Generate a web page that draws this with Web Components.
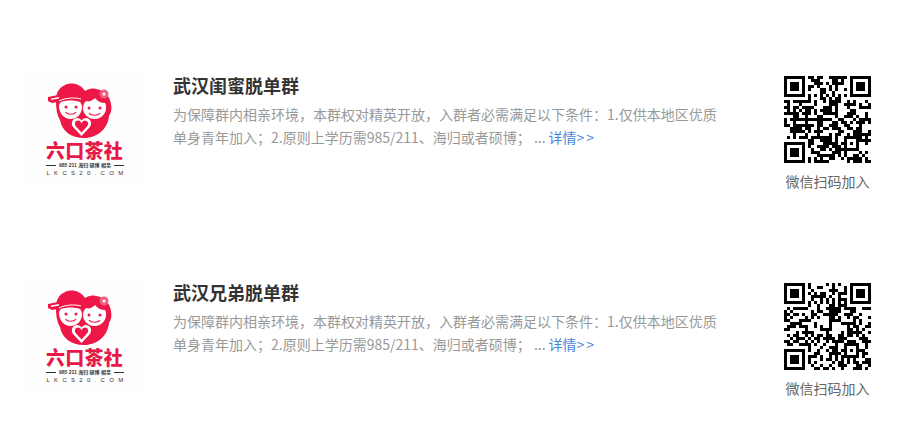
<!DOCTYPE html>
<html lang="zh">
<head>
<meta charset="utf-8">
<style>
  html, body { margin: 0; background: #fff; }
  body { font-family: "Noto Sans CJK SC", "Noto Sans", sans-serif; }
  main { display: flex; flex-direction: column; gap: 87px; padding-top: 72px; width: 897px; }
</style>
</head>
<body>
<main>
  <group-card heading="武汉闺蜜脱单群" seed="11">
    <span slot="one">为保障群内相亲环境，本群权对精英开放，入群者必需满足以下条件：1.仅供本地区优质</span>
    <span slot="two">单身青年加入；2.原则上学历需985/211、海归或者硕博； ...</span>
  </group-card>
  <group-card heading="武汉兄弟脱单群" seed="29">
    <span slot="one">为保障群内相亲环境，本群权对精英开放，入群者必需满足以下条件：1.仅供本地区优质</span>
    <span slot="two">单身青年加入；2.原则上学历需985/211、海归或者硕博； ...</span>
  </group-card>
</main>
<script>
// red couple logo, brand name stays real text
class TeaLogo extends HTMLElement {
  constructor() {
    super();
    this.attachShadow({ mode: "open" }).innerHTML = `
      <style>
        :host { display: flex; flex-direction: column; align-items: center; width: 116px; height: 116px; background: #fefefe; }
        svg { display: block; margin-top: 10px; flex: none; }
        .name { font: 900 19px/22px "Liberation Sans", "Noto Sans CJK SC", sans-serif; color: #e8184a; letter-spacing: .3px; margin: 3px 1px -1px 0; white-space: nowrap; }
        .tag { display: flex; align-items: center; gap: 3px; font: 700 5px/7px "Liberation Sans", "Noto Sans CJK SC", sans-serif; color: #333; white-space: nowrap; }
        .tag i { width: 10px; height: 1px; background: #333; }
        .url { font: 400 6px/9px "Liberation Sans", sans-serif; letter-spacing: 4.3px; color: #333; white-space: nowrap; margin-right: -4px; }
      </style>
      <svg width="80" height="56" viewBox="0 0 80 56">
        <!-- hat, hair and shared body -->
        <path d="M11 18c0-8 4-13 9-15 3-2 10-2 13 0 3 1 5 3 7 6 3-2 7-3 11-2 8 1 14 7 15 15 1 5 0 9-2 12-1 12-11 22-25 22-13 0-22-7-24-18-3-5-4-11-4-20z" fill="#ed1848"/>
        <circle cx="59" cy="12" r="4.500" fill="#ef5f82"/>
        <circle cx="59" cy="12" r="1.500" fill="#fff"/>
        <!-- hat brim -->
        <path d="M3 19l0-4 10-2 22-2 2 4-20 4-10 2z" fill="#ed1848"/>
        <path d="M6 18l0-1.500 8-1.500 0 1.500z" fill="#fff"/>
        <path d="M14 19c6-3 15-4 22-2" fill="none" stroke="#fff" stroke-width="1"/>
        <!-- faces -->
        <path d="M14 24c0-2 1-3 2-4 6-2 13-2 19 0 1 1 2 3 2 5 0 7-5 12-11.500 12S14 31 14 24z" fill="#fff"/>
        <path d="M38 26c0-3 1-5 3-7 3 1 6 0 9-3 2 3 6 5 10 5 1 1 1 3 1 5 0 6-5 11-11.500 11S38 32 38 26z" fill="#fff"/>
        <g fill="#ed1848"><circle cx="21" cy="25" r="1.500"/><circle cx="31" cy="25" r="1.500"/><circle cx="44" cy="26" r="1.500"/><circle cx="55" cy="26" r="1.500"/></g>
        <g fill="none" stroke="#ed1848" stroke-width="1.200"><path d="M20.500 30c2 3 8.500 3 10.500 0"/><path d="M44 31c2 3 9 3 11 0"/></g>
        <!-- heart -->
        <path d="M36.500 54l-8-8.500c-3.500-4-1-9.500 3.500-9.500 2 0 3.500 1 4.500 2.500 1-1.500 2.500-2.500 4.500-2.500 4.500 0 7 5.500 3.500 9.500z" fill="#fff"/>
        <path d="M36.500 50.500l-5.500-6c-2.500-3-.5-6 2-6 1.500 0 3 1 3.500 3 .5-2 2-3 3.500-3 2.500 0 4.500 3 2 6z" fill="#ed1848"/>
      </svg>
      <div class="name">六口茶社</div>
      <div class="tag"><i></i><span>985 211 海归 硕博 相亲</span><i></i></div>
      <div class="url">LKCS20.COM</div>
    `;
  }
}

// stand-in QR matrix: 29 modules with finders, timing lines and alignment square
class QrCode extends HTMLElement {
  connectedCallback() {
    const n = 29;
    let s = parseInt(this.getAttribute("seed") || "1", 10) * 2654435761 >>> 0 || 1;
    const rnd = () => {
      s ^= s << 13; s >>>= 0;
      s ^= s >>> 17;
      s ^= s << 5; s >>>= 0;
      return (s >>> 7) % 100 < 52 ? 1 : 0;
    };
    for (let i = 0; i < 20; i++) rnd();
    const finder = (x, y, ox, oy) => {
      const a = x - ox, b = y - oy;
      if (a < -1 || b < -1 || a > 7 || b > 7) return null;
      if (a < 0 || b < 0 || a > 6 || b > 6) return 0;
      if (a === 0 || b === 0 || a === 6 || b === 6) return 1;
      return a >= 2 && a <= 4 && b >= 2 && b <= 4 ? 1 : 0;
    };
    let d = "";
    for (let y = 0; y < n; y++) for (let x = 0; x < n; x++) {
      let v = finder(x, y, 0, 0);
      if (v === null) v = finder(x, y, 22, 0);
      if (v === null) v = finder(x, y, 0, 22);
      if (v === null && Math.abs(x - 22) <= 2 && Math.abs(y - 22) <= 2) {
        const r = Math.max(Math.abs(x - 22), Math.abs(y - 22));
        v = r === 1 ? 0 : 1;
      }
      if (v === null && (x === 6 || y === 6)) v = (x + y + 1) % 2;
      if (v === null) v = rnd();
      if (v) d += `M${x} ${y}h1v1h-1z`;
    }
    this.attachShadow({ mode: "open" }).innerHTML = `
      <style>:host { display: block; width: 87px; height: 87px; } svg { display: block; }</style>
      <svg width="87" height="87" viewBox="0 0 29 29" shape-rendering="crispEdges"><path d="${d}" fill="#000"/></svg>`;
  }
}

class GroupCard extends HTMLElement {
  connectedCallback() {
    const heading = this.getAttribute("heading");
    const seed = this.getAttribute("seed");
    this.attachShadow({ mode: "open" }).innerHTML = `
      <style>
        :host { display: grid; grid-template-columns: 116px 1fr auto; height: 120px; padding: 0 26px 0 27px; box-sizing: border-box; width: 897px; }
        .body { padding-left: 30px; }
        h3 { margin: -1px 0 0; font: 700 18px/28px "Noto Sans CJK SC", sans-serif; color: #333; }
        .desc { margin-top: 4px; font: 400 14px/23px "Noto Sans CJK SC", sans-serif; color: #999; }
        .line { white-space: nowrap; }
        a { color: #4a86d8; text-decoration: none; margin-left: 3px; }
        a b { font-weight: 400; letter-spacing: 2px; }
        .qr { display: flex; flex-direction: column; align-items: center; padding-top: 4px; }
        .qr span { font: 400 14px/20px "Noto Sans CJK SC", sans-serif; color: #666; margin-top: 8px; white-space: nowrap; }
      </style>
      <tea-logo></tea-logo>
      <div class="body">
        <h3>${heading}</h3>
        <div class="desc">
          <div class="line"><slot name="one"></slot></div>
          <div class="line"><slot name="two"></slot><a href="#">详情<b>&gt;&gt;</b></a></div>
        </div>
      </div>
      <div class="qr"><qr-code seed="${seed}"></qr-code><span>微信扫码加入</span></div>
    `;
  }
}

customElements.define("tea-logo", TeaLogo);
customElements.define("qr-code", QrCode);
customElements.define("group-card", GroupCard);
</script>
</body>
</html>
